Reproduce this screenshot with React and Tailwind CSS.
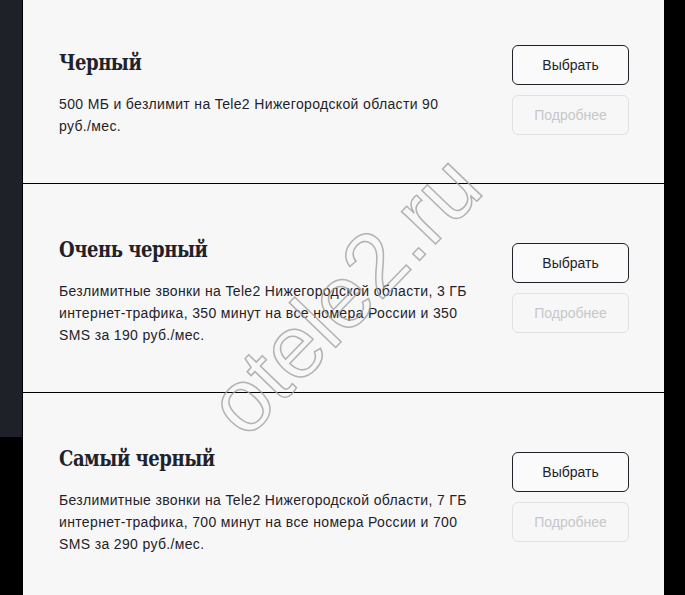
import React from 'react';

const plans = [
  {
    name: 'Черный',
    text: (
      <>
        500 МБ и безлимит на Tele2 Нижегородской области 90
        <br />
        руб./мес.
      </>
    ),
  },
  {
    name: 'Очень черный',
    text: (
      <>
        Безлимитные звонки на Tele2 Нижегородской области, 3 ГБ
        <br />
        интернет-трафика, 350 минут на все номера России и 350
        <br />
        SMS за 190 руб./мес.
      </>
    ),
  },
  {
    name: 'Самый черный',
    text: (
      <>
        Безлимитные звонки на Tele2 Нижегородской области, 7 ГБ
        <br />
        интернет-трафика, 700 минут на все номера России и 700
        <br />
        SMS за 290 руб./мес.
      </>
    ),
  },
];

function PlanCard({ plan }) {
  return (
    <div className="flex items-center justify-between border-b border-black pl-[36px] pr-[35px]">
      <div className="pt-[49px] pb-[46px]">
        <h3 className="origin-left scale-x-[0.91] text-[22px] leading-[32px] font-bold text-[#1f2229] [font-family:'DejaVu_Serif_Condensed','DejaVu_Serif',serif] tracking-[-0.5px]">
          {plan.name}
        </h3>
        <p className="mt-[15px] text-[14px] leading-[22px] tracking-[0.35px] text-[#1f2229]">{plan.text}</p>
      </div>
      <div className="flex flex-col gap-[10px]">
        <button className="w-[117px] h-10 rounded-md border border-[#1f2229] bg-[#fafafa] text-[14px] text-[#1f2229]">
          Выбрать
        </button>
        <button className="w-[117px] h-10 rounded-md border border-[#e0e1e3] bg-[#f7f7f7] text-[14px] text-[#c6c7ca]">
          Подробнее
        </button>
      </div>
    </div>
  );
}

export default function App() {
  return (
    <div className="relative flex h-[595px] w-[685px] overflow-hidden bg-black [font-family:'Liberation_Sans',Arial,sans-serif]">
      <div className="w-[22px] h-[437px] bg-[#1e2127]" />
      <div className="ml-px w-[641px] bg-[#f7f7f7]">
        <div className="-mt-[3px]">
          {plans.map((p) => (
            <PlanCard key={p.name} plan={p} />
          ))}
        </div>
      </div>
      <span className="pointer-events-none absolute left-[344px] top-[295px] -translate-x-1/2 -translate-y-1/2 -rotate-[46deg] whitespace-nowrap text-[89px] leading-none text-transparent [-webkit-text-stroke:1.5px_rgba(160,160,160,0.8)]">
        otele2.ru
      </span>
    </div>
  );
}
